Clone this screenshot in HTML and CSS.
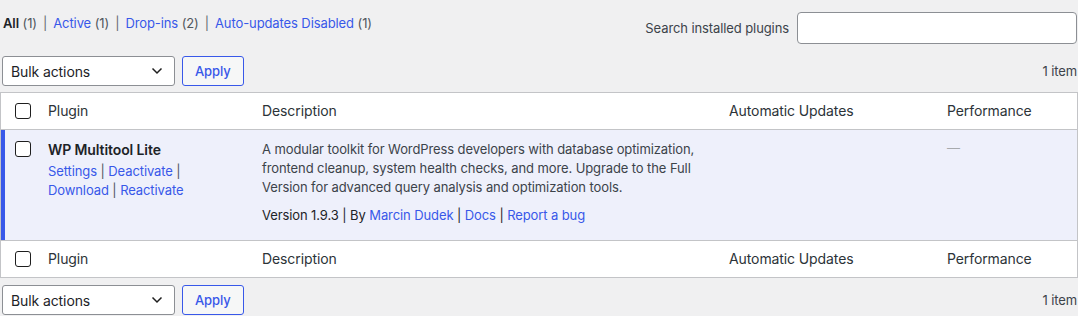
FILE: index.html
```html
<!DOCTYPE html>
<html lang="en">
<head>
<meta charset="utf-8">
<title>Plugins</title>
<link rel="stylesheet" href="styles.css">
</head>
<body>
<div class="wrap">
  <div class="top-bar">
    <ul class="subsubsub">
      <li class="current"><span class="label">All</span> <span class="count">(1)</span></li>
      <li class="sep">|</li>
      <li><a href="#">Active</a> <span class="count">(1)</span></li>
      <li class="sep">|</li>
      <li><a href="#">Drop-ins</a> <span class="count">(2)</span></li>
      <li class="sep">|</li>
      <li><a href="#">Auto-updates Disabled</a> <span class="count">(1)</span></li>
    </ul>
    <div class="search-box">
      <label class="search-label" for="plugin-search">Search installed plugins</label>
      <input class="search-input" id="plugin-search" type="search">
    </div>
  </div>

  <div class="tablenav tablenav-top">
    <div class="bulk">
      <div class="select">
        <span>Bulk actions</span>
        <svg class="chev" width="12" height="8" viewBox="0 0 12 8"><path d="M1.5 1.5 L6 6 L10.5 1.5" fill="none" stroke="#1e1e1e" stroke-width="1.5"/></svg>
      </div>
      <button class="apply">Apply</button>
    </div>
    <div class="items">1 item</div>
  </div>

  <table class="plugins">
    <colgroup>
      <col class="c-check">
      <col class="c-name">
      <col class="c-desc">
      <col class="c-auto">
      <col class="c-perf">
    </colgroup>
    <thead>
      <tr>
        <th class="check"><span class="cb"></span></th>
        <th>Plugin</th>
        <th>Description</th>
        <th>Automatic Updates</th>
        <th>Performance</th>
      </tr>
    </thead>
    <tbody>
      <tr class="active">
        <td class="check"><span class="cb"></span></td>
        <td class="name">
          <strong class="title">WP Multitool Lite</strong>
          <div class="row-actions">
            <a href="#">Settings</a> | <a href="#">Deactivate</a> |<br>
            <a href="#">Download</a> | <a href="#">Reactivate</a>
          </div>
        </td>
        <td class="desc">
          <p class="desc-text">A modular toolkit for WordPress developers with database optimization, frontend cleanup, system health checks, and more. Upgrade to the Full Version for advanced query analysis and optimization tools.</p>
          <div class="meta">Version 1.9.3 | By <a href="#">Marcin Dudek</a> | <a href="#">Docs</a> | <a href="#">Report a bug</a></div>
        </td>
        <td></td>
        <td class="perf"><span class="dash">—</span></td>
      </tr>
    </tbody>
    <tfoot>
      <tr>
        <th class="check"><span class="cb"></span></th>
        <th>Plugin</th>
        <th>Description</th>
        <th>Automatic Updates</th>
        <th>Performance</th>
      </tr>
    </tfoot>
  </table>

  <div class="tablenav tablenav-bottom">
    <div class="bulk">
      <div class="select">
        <span>Bulk actions</span>
        <svg class="chev" width="12" height="8" viewBox="0 0 12 8"><path d="M1.5 1.5 L6 6 L10.5 1.5" fill="none" stroke="#1e1e1e" stroke-width="1.5"/></svg>
      </div>
      <button class="apply">Apply</button>
    </div>
    <div class="items">1 item</div>
  </div>
</div>
</body>
</html>
```

FILE: styles.css
```css
* { box-sizing: border-box; }
html, body {
  margin: 0;
  padding: 0;
  background: #f0f0f1;
  font-family: Inter, "Noto Sans", sans-serif;
  color: #3c434a;
  font-size: 13px;
  letter-spacing: -0.1px;
}
a { color: #3858e9; text-decoration: none; }

.top-bar {
  display: flex;
  justify-content: space-between;
  align-items: flex-start;
}
.subsubsub {
  list-style: none;
  margin: 12px 0 0 3px;
  padding: 0;
  display: flex;
  line-height: 22px;
  font-size: 13px;
}
.subsubsub li { white-space: pre; }
.subsubsub .label { font-weight: 600; color: #1d2327; }
.subsubsub .count { color: #50575e; }
.subsubsub .sep { color: #646970; padding: 0 6px; }

.search-box {
  display: flex;
  align-items: center;
  gap: 8px;
  margin-top: 12px;
  margin-right: 1px;
}
.search-label { color: #3c434a; font-size: 13px; }
.search-input {
  width: 280px;
  height: 32px;
  border: 1px solid #8c8f94;
  border-radius: 4px;
  background: #fff;
  margin: 0;
}

.tablenav {
  display: flex;
  justify-content: space-between;
  align-items: center;
  height: 30px;
}
.tablenav-top { margin: 12px 0 6px; }
.tablenav-bottom { margin-top: 7px; }
.bulk { display: flex; align-items: center; gap: 7px; margin-left: 2px; }
.select {
  width: 173px;
  height: 30px;
  border: 1px solid #8c8f94;
  border-radius: 3px;
  background: #fff;
  display: flex;
  align-items: center;
  justify-content: space-between;
  padding: 0 11px 0 8px;
  font-size: 14px;
  color: #1d2327;
}
.apply {
  height: 30px;
  padding: 0 12px;
  border: 1px solid #3858e9;
  border-radius: 3px;
  background: #f6f7f7;
  color: #3858e9;
  font-family: inherit;
  font-size: 13px;
  font-weight: 500;
  letter-spacing: -0.1px;
}
.items { color: #3c434a; font-size: 13px; margin-right: 1px; }

.plugins {
  width: 100%;
  table-layout: fixed;
  border-collapse: separate;
  border-spacing: 0;
  border: 1px solid #c3c4c7;
  background: #fff;
}
.c-check { width: 37px; }
.c-name { width: 214px; }
.c-desc { width: 467px; }
.c-auto { width: 218px; }
.plugins th {
  text-align: left;
  font-weight: 400;
  font-size: 14px;
  color: #2c3338;
  padding: 8px 10px;
  line-height: 20px;
}
.plugins thead th { border-bottom: 1px solid #c3c4c7; }
.plugins .check { padding: 0 0 0 14px; vertical-align: middle; }
.cb {
  display: block;
  width: 16px;
  height: 16px;
  border: 1px solid #1e1e1e;
  border-radius: 3px;
  background: #fff;
}
.plugins tbody td {
  background: #eef0fb;
  vertical-align: top;
  padding: 9px 10px 16px;
  border-bottom: 1px solid #c3c4c7;
  line-height: 19px;
}
.plugins tbody td.desc { padding-top: 10px; padding-bottom: 15px; }
.plugins tbody td.check {
  vertical-align: top;
  padding: 11px 0 0 14px;
  box-shadow: inset 4px 0 0 #3858e9;
}
.title {
  display: block;
  font-size: 14px;
  font-weight: 600;
  color: #1d2327;
  line-height: 21px;
}
.row-actions { margin-top: 2px; color: #50575e; }
.desc-text { margin: 0 0 9px; color: #3c434a; }
.meta { color: #1d2327; }
.perf { color: #a7aaad; }
```
